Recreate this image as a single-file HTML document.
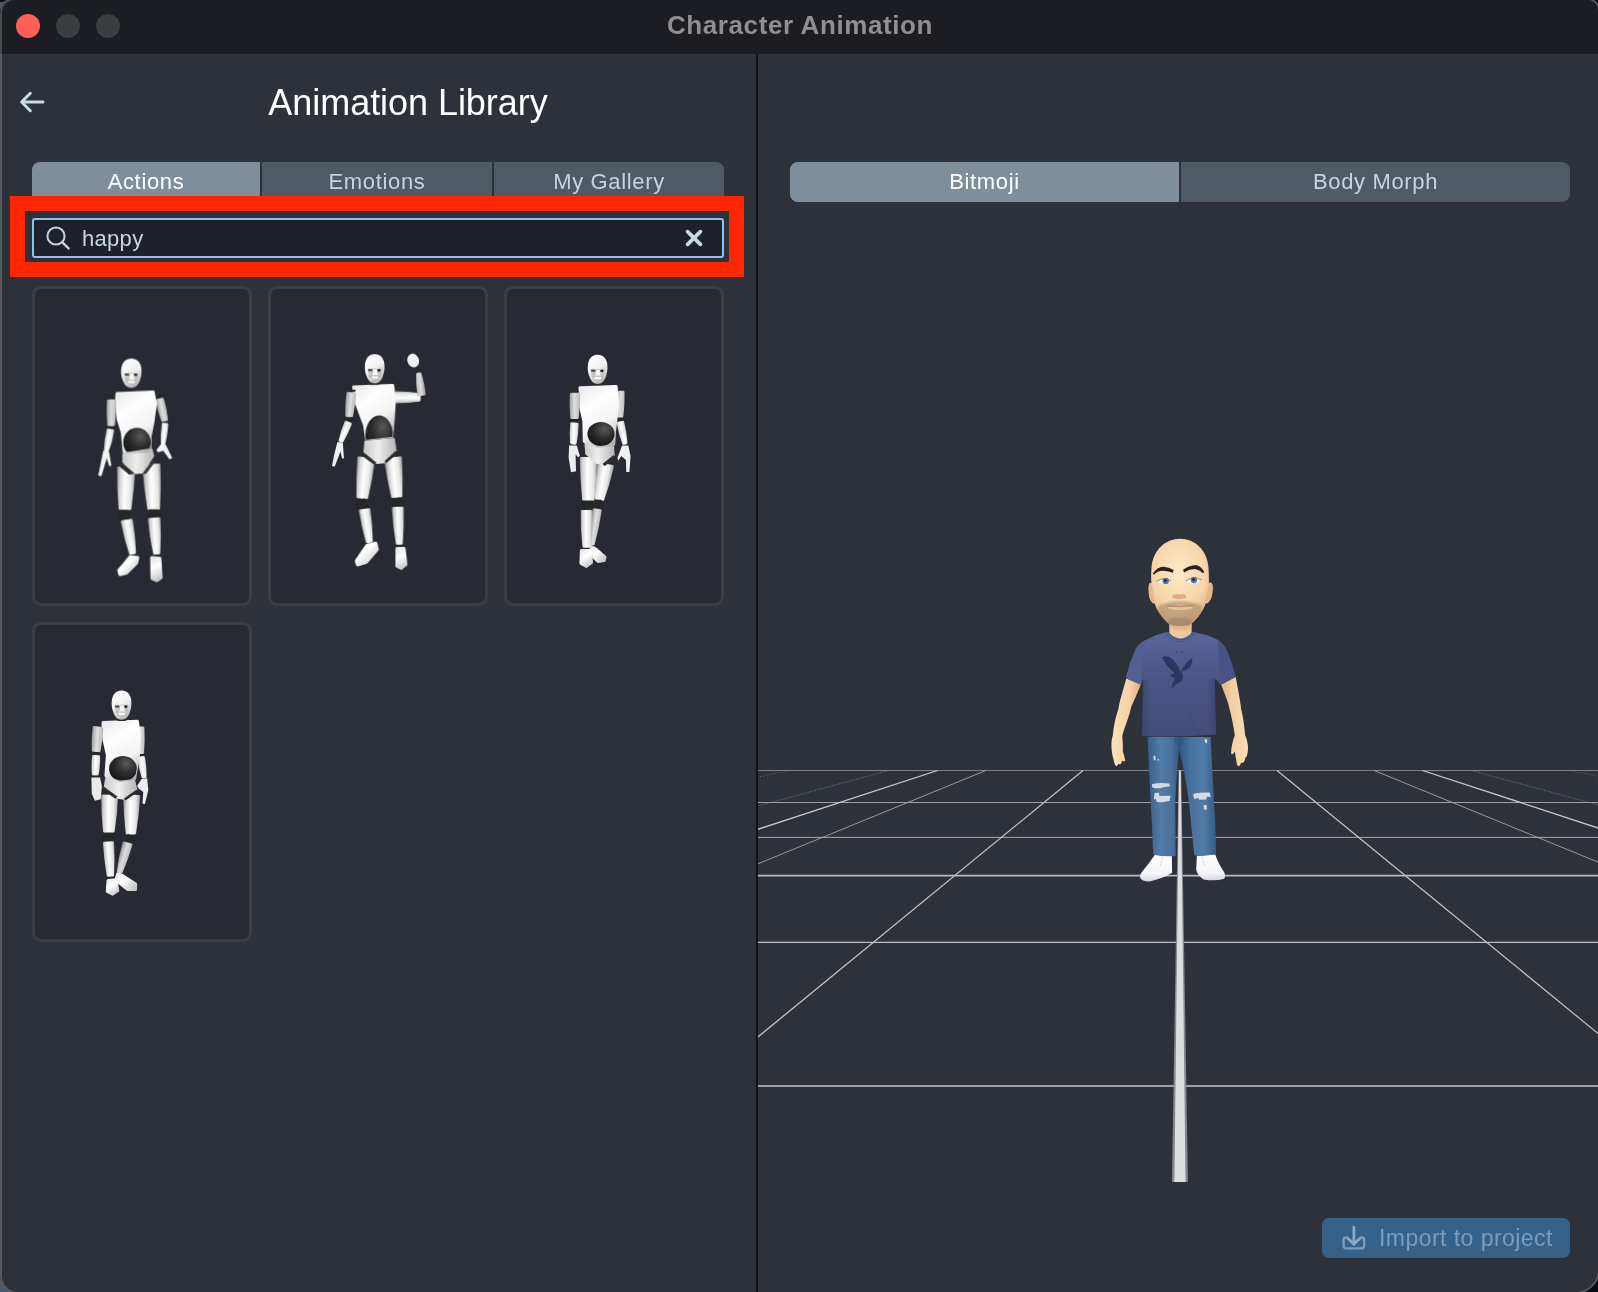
<!DOCTYPE html>
<html>
<head>
<meta charset="utf-8">
<title>Character Animation</title>
<style>
*{box-sizing:border-box;margin:0;padding:0}
html,body{width:1598px;height:1292px;overflow:hidden;background:#0a0c10;font-family:"Liberation Sans",sans-serif;}
#bgl{position:absolute;left:0;top:2px;width:10px;height:1290px;background:#46596a}
#win{position:absolute;left:0;top:0;width:1598px;height:1292px;background:#2d313a;box-shadow:0 0 0 1.5px #5b5f66;border-radius:13px 10px 22px 16px;overflow:hidden;}
#edge{position:absolute;left:0;top:0;width:1598px;height:1292px;border-radius:13px 10px 22px 16px;box-shadow:inset 2px 0 0 0 rgba(255,255,255,0.2);pointer-events:none;z-index:50}
#titlebar{position:absolute;left:0;top:0;width:1598px;height:54px;background:#1b1d22}
.dot{position:absolute;top:14px;width:24px;height:24px;border-radius:50%}
#title{position:absolute;left:0;top:0;width:1598px;height:54px;text-align:center;color:#8f8f90;font-weight:bold;font-size:26px;line-height:50px;letter-spacing:0.6px;padding-left:2px}
#divider{position:absolute;left:756px;top:54px;width:2px;height:1238px;background:#0f1114}
.abs{position:absolute}
.tab{position:absolute;top:162px;height:40px;background:#505a65;color:#c6d4e1;font-size:22px;line-height:40px;text-align:center;letter-spacing:0.65px}
.tab.on{background:#808d9b;color:#fff}
#red{position:absolute;left:10px;top:196px;width:734px;height:81px;border:15px solid #ff2600;background:#2d313a}
#search{position:absolute;left:32px;top:218px;width:692px;height:40px;border:2px solid #8bc2f2;border-radius:3px;background:#1e2129}
.card{position:absolute;width:220px;height:320px;border:3px solid #3a3d44;border-radius:9px;background:#272a33}
#import{position:absolute;left:1322px;top:1218px;width:248px;height:40px;border-radius:7px;background:#36628a;color:#7f9cb7;font-size:23px;line-height:40px;letter-spacing:0.45px}
.tab,#title,#h1,#q,#imptxt{will-change:transform}
</style>
</head>
<body>
<div id="bgl"></div>
<div id="win">
  <div id="titlebar"></div>
  <div class="dot" style="left:16px;background:#fe5f57"></div>
  <div class="dot" style="left:56px;background:#3a3d41"></div>
  <div class="dot" style="left:96px;background:#3a3d41"></div>
  <div id="title">Character Animation</div>
  <div id="edge"></div>
  <div id="divider"></div>

  <!-- left panel -->
  <svg class="abs" style="left:0;top:54px" width="756" height="100" viewBox="0 54 756 100">
    <path d="M43 102H22M30.3 93.3L21.6 102L30.3 110.7" fill="none" stroke="#c9dae8" stroke-width="3" stroke-linecap="round" stroke-linejoin="round"/>
  </svg>
  <div id="h1" class="abs" style="left:0;top:80px;width:816px;text-align:center;color:#fff;font-size:36px;line-height:46px;letter-spacing:-0.05px">Animation Library</div>

  <div class="tab on" style="left:32px;width:228px;border-radius:8px 0 0 0">Actions</div>
  <div class="tab" style="left:262px;width:230px">Emotions</div>
  <div class="tab" style="left:494px;width:230px;border-radius:0 8px 0 0">My Gallery</div>

  <div id="red"></div>
  <div id="search"></div>
  <svg class="abs" style="left:40px;top:220px" width="40" height="36" viewBox="40 220 40 36">
    <circle cx="56" cy="236" r="8.6" fill="none" stroke="#c6d4e0" stroke-width="2"/>
    <path d="M62.3 242.3L68.6 248.4" stroke="#c6d4e0" stroke-width="2.4" stroke-linecap="round"/>
  </svg>
  <div id="q" class="abs" style="left:82px;top:223px;color:#c8d5e1;font-size:22px;line-height:32px;letter-spacing:0.3px">happy</div>
  <svg class="abs" style="left:680px;top:224px" width="28" height="28" viewBox="680 224 28 28">
    <path d="M687.6 231.7L700.4 244.3M700.4 231.7L687.6 244.3" stroke="#cad7e1" stroke-width="3.8" stroke-linecap="round"/>
  </svg>

  <div class="card" style="left:32px;top:286px"></div>
  <div class="card" style="left:268px;top:286px"></div>
  <div class="card" style="left:504px;top:286px"></div>
  <div class="card" style="left:32px;top:622px"></div>

<!--ROBOTS-->
<svg class="abs" style="left:82px;top:340px" width="120" height="250" viewBox="0 0 620 1292">
<defs><filter id="abl"><feGaussianBlur stdDeviation="1.6"/></filter><linearGradient id="ag1" gradientUnits="userSpaceOnUse" x1="388" y1="367" x2="440" y2="355"><stop offset="0" stop-color="#7a7a7a"/><stop offset="0.2" stop-color="#b4b4b4"/><stop offset="0.5" stop-color="#dedede"/><stop offset="0.85" stop-color="#c2c2c2"/><stop offset="1" stop-color="#8a8a8a"/></linearGradient><linearGradient id="ag2" gradientUnits="userSpaceOnUse" x1="403" y1="482" x2="445" y2="486"><stop offset="0" stop-color="#8a8a8a"/><stop offset="0.16" stop-color="#d2d2d2"/><stop offset="0.45" stop-color="#ffffff"/><stop offset="0.78" stop-color="#e6e6e6"/><stop offset="1" stop-color="#a2a2a2"/></linearGradient><linearGradient id="ag3" gradientUnits="userSpaceOnUse" x1="178" y1="765" x2="272" y2="768"><stop offset="0" stop-color="#8a8a8a"/><stop offset="0.16" stop-color="#d2d2d2"/><stop offset="0.45" stop-color="#ffffff"/><stop offset="0.78" stop-color="#e6e6e6"/><stop offset="1" stop-color="#a2a2a2"/></linearGradient><linearGradient id="ag4" gradientUnits="userSpaceOnUse" x1="317" y1="761" x2="411" y2="757"><stop offset="0" stop-color="#8a8a8a"/><stop offset="0.16" stop-color="#d2d2d2"/><stop offset="0.45" stop-color="#ffffff"/><stop offset="0.78" stop-color="#e6e6e6"/><stop offset="1" stop-color="#a2a2a2"/></linearGradient><linearGradient id="ag5" gradientUnits="userSpaceOnUse" x1="214" y1="1024" x2="278" y2="1012"><stop offset="0" stop-color="#8a8a8a"/><stop offset="0.16" stop-color="#d2d2d2"/><stop offset="0.45" stop-color="#ffffff"/><stop offset="0.78" stop-color="#e6e6e6"/><stop offset="1" stop-color="#a2a2a2"/></linearGradient><linearGradient id="ag6" gradientUnits="userSpaceOnUse" x1="346" y1="1015" x2="412" y2="1011"><stop offset="0" stop-color="#8a8a8a"/><stop offset="0.16" stop-color="#d2d2d2"/><stop offset="0.45" stop-color="#ffffff"/><stop offset="0.78" stop-color="#e6e6e6"/><stop offset="1" stop-color="#a2a2a2"/></linearGradient><linearGradient id="ag7" gradientUnits="userSpaceOnUse" x1="190" y1="1120" x2="288" y2="1212"><stop offset="0" stop-color="#e6e6e6"/><stop offset="0.4" stop-color="#ffffff"/><stop offset="1" stop-color="#c2c2c2"/></linearGradient><linearGradient id="ag8" gradientUnits="userSpaceOnUse" x1="360" y1="1124" x2="408" y2="1244"><stop offset="0" stop-color="#e6e6e6"/><stop offset="0.4" stop-color="#ffffff"/><stop offset="1" stop-color="#c2c2c2"/></linearGradient><linearGradient id="ag9" gradientUnits="userSpaceOnUse" x1="208" y1="560" x2="374" y2="560"><stop offset="0" stop-color="#c9c9c9"/><stop offset="0.45" stop-color="#eeeeee"/><stop offset="1" stop-color="#b5b5b5"/></linearGradient><linearGradient id="ag10" gradientUnits="userSpaceOnUse" x1="176" y1="268" x2="380" y2="580"><stop offset="0" stop-color="#e9e9e9"/><stop offset="0.3" stop-color="#ffffff"/><stop offset="0.62" stop-color="#f4f4f4"/><stop offset="1" stop-color="#a4a4a4"/></linearGradient><radialGradient id="ag11" cx="0.62" cy="0.3" r="0.75"><stop offset="0" stop-color="#5a5a5a"/><stop offset="0.5" stop-color="#2c2c2c"/><stop offset="1" stop-color="#141414"/></radialGradient><clipPath id="ac11"><path d="M200 440 L370 440 L356 560 L214 582Z"/></clipPath><linearGradient id="ag12" gradientUnits="userSpaceOnUse" x1="122" y1="375" x2="180" y2="376"><stop offset="0" stop-color="#7a7a7a"/><stop offset="0.2" stop-color="#b4b4b4"/><stop offset="0.5" stop-color="#dedede"/><stop offset="0.85" stop-color="#c2c2c2"/><stop offset="1" stop-color="#8a8a8a"/></linearGradient><linearGradient id="ag13" gradientUnits="userSpaceOnUse" x1="113" y1="515" x2="160" y2="523"><stop offset="0" stop-color="#8a8a8a"/><stop offset="0.16" stop-color="#d2d2d2"/><stop offset="0.45" stop-color="#ffffff"/><stop offset="0.78" stop-color="#e6e6e6"/><stop offset="1" stop-color="#a2a2a2"/></linearGradient><linearGradient id="ag14" x1="0.3" y1="0" x2="0.7" y2="1"><stop offset="0" stop-color="#ffffff"/><stop offset="0.45" stop-color="#f2f2f2"/><stop offset="1" stop-color="#b0b0b0"/></linearGradient></defs>
<g filter="url(#abl)">
<rect x="377.0" y="288.0" width="30" height="24" rx="8" fill="#262626" transform="rotate(-20 392 300)"/>
<path d="M387 312 Q396 365 416 416 L437 411 Q432 357 416 305Z" fill="url(#ag1)" stroke="url(#ag1)" stroke-width="14" stroke-linejoin="round"/>
<path d="M419 434 Q412 483 414 533 L424 534 Q436 485 439 436Z" fill="url(#ag2)" stroke="url(#ag2)" stroke-width="14" stroke-linejoin="round"/>
<path d="M408 538 L432 540 L466 610 L452 616 L420 572 L392 580 L384 568Z" fill="#f2f2f2" />
<path d="M188 661 Q187 765 196 870 L248 872 Q263 768 268 663Z" fill="url(#ag3)" stroke="url(#ag3)" stroke-width="14" stroke-linejoin="round"/>
<path d="M318 649 Q326 761 344 872 L396 870 Q402 757 398 645Z" fill="url(#ag4)" stroke="url(#ag4)" stroke-width="14" stroke-linejoin="round"/>
<rect x="192.0" y="879.0" width="56" height="46" rx="8" fill="#262626" transform="rotate(0 220 902)"/>
<rect x="342.0" y="875.0" width="60" height="42" rx="8" fill="#262626" transform="rotate(0 372 896)"/>
<path d="M207 939 Q223 1022 250 1103 L272 1099 Q269 1014 256 931Z" fill="url(#ag5)" stroke="url(#ag5)" stroke-width="14" stroke-linejoin="round"/>
<path d="M347 927 Q355 1015 374 1102 L397 1100 Q403 1011 398 923Z" fill="url(#ag6)" stroke="url(#ag6)" stroke-width="14" stroke-linejoin="round"/>
<path d="M248 1120 L288 1124 L282 1152 L230 1204 L196 1212 L190 1190 L216 1160Z" fill="url(#ag7)" stroke="url(#ag7)" stroke-width="16" stroke-linejoin="round"/>
<path d="M360 1124 L402 1128 L408 1228 L385 1244 L362 1232Z" fill="url(#ag8)" stroke="url(#ag8)" stroke-width="16" stroke-linejoin="round"/>
<path d="M208 588 L362 560 L374 600 L345 642 L315 690 L270 692 L238 670 L208 632Z" fill="url(#ag9)"/>
<path d="M200 628 L272 690 L244 696 L192 652Z" fill="#2e2e2e" />
<path d="M312 690 L366 618 L376 632 L330 692Z" fill="#3a3a3a" />
<path d="M180 276 L368 268 L380 330 L366 430 L352 500 L352 560 L345 574 L216 580 L208 480 L186 410 L176 330Z" fill="url(#ag10)" stroke="url(#ag10)" stroke-width="14" stroke-linejoin="round"/>
<ellipse cx="284" cy="528" rx="71" ry="74" fill="url(#ag11)" clip-path="url(#ac11)"/>
<rect x="133.0" y="287.0" width="34" height="26" rx="8" fill="#262626" transform="rotate(25 150 300)"/>
<path d="M135 313 Q131 375 137 438 L163 438 Q171 376 169 313Z" fill="url(#ag12)" stroke="url(#ag12)" stroke-width="14" stroke-linejoin="round"/>
<rect x="130.0" y="448.0" width="40" height="8" rx="8" fill="#262626" transform="rotate(0 150 452)"/>
<path d="M134 464 Q122 516 120 570 L132 572 Q151 522 159 469Z" fill="url(#ag13)" stroke="url(#ag13)" stroke-width="14" stroke-linejoin="round"/>
<path d="M110 572 L140 578 L152 650 L140 652 L128 610 L100 704 L84 700 L96 640Z" fill="#f2f2f2" />
<rect x="233" y="234" width="46" height="20" rx="4" fill="#2e2e2e"/>
<path d="M255 96 C317.4 96 313.24 175.2 299.72 207.6 C291.4 236.39999999999998 273.2 247.2 255 247.2 C236.8 247.2 218.6 236.39999999999998 210.28 207.6 C196.76 175.2 192.6 96 255 96Z" fill="url(#ag14)"/>
<path d="M217.56 170 L292.44 170 L286.2 212.64 Q255 247.2 223.8 212.64Z" fill="#bdbdbd" opacity="0.8"/>
<path d="M249 174 L265 174 L271 204.0 L243 204.0Z" fill="#ffffff" opacity="0.85"/>
<rect x="221" y="174" width="22" height="10" rx="3" fill="#4a4640"/><rect x="269" y="174" width="16" height="11" rx="4" fill="#1e1e1e"/>
<rect x="239" y="211.2" width="34" height="11" rx="3" fill="#fafafa"/>
</g>
</svg>
<svg class="abs" style="left:318px;top:340px" width="120" height="250" viewBox="0 0 620 1292">
<defs><filter id="bbl"><feGaussianBlur stdDeviation="1.6"/></filter><linearGradient id="bg1" gradientUnits="userSpaceOnUse" x1="464" y1="330" x2="464" y2="262"><stop offset="0" stop-color="#8a8a8a"/><stop offset="0.16" stop-color="#d2d2d2"/><stop offset="0.45" stop-color="#ffffff"/><stop offset="0.78" stop-color="#e6e6e6"/><stop offset="1" stop-color="#a2a2a2"/></linearGradient><linearGradient id="bg2" gradientUnits="userSpaceOnUse" x1="553" y1="225" x2="503" y2="231"><stop offset="0" stop-color="#7a7a7a"/><stop offset="0.2" stop-color="#b4b4b4"/><stop offset="0.5" stop-color="#dedede"/><stop offset="0.85" stop-color="#c2c2c2"/><stop offset="1" stop-color="#8a8a8a"/></linearGradient><linearGradient id="bg3" gradientUnits="userSpaceOnUse" x1="194" y1="708" x2="284" y2="717"><stop offset="0" stop-color="#8a8a8a"/><stop offset="0.16" stop-color="#d2d2d2"/><stop offset="0.45" stop-color="#ffffff"/><stop offset="0.78" stop-color="#e6e6e6"/><stop offset="1" stop-color="#a2a2a2"/></linearGradient><linearGradient id="bg4" gradientUnits="userSpaceOnUse" x1="353" y1="714" x2="441" y2="705"><stop offset="0" stop-color="#8a8a8a"/><stop offset="0.16" stop-color="#d2d2d2"/><stop offset="0.45" stop-color="#ffffff"/><stop offset="0.78" stop-color="#e6e6e6"/><stop offset="1" stop-color="#a2a2a2"/></linearGradient><linearGradient id="bg5" gradientUnits="userSpaceOnUse" x1="222" y1="965" x2="284" y2="955"><stop offset="0" stop-color="#8a8a8a"/><stop offset="0.16" stop-color="#d2d2d2"/><stop offset="0.45" stop-color="#ffffff"/><stop offset="0.78" stop-color="#e6e6e6"/><stop offset="1" stop-color="#a2a2a2"/></linearGradient><linearGradient id="bg6" gradientUnits="userSpaceOnUse" x1="385" y1="961" x2="447" y2="959"><stop offset="0" stop-color="#8a8a8a"/><stop offset="0.16" stop-color="#d2d2d2"/><stop offset="0.45" stop-color="#ffffff"/><stop offset="0.78" stop-color="#e6e6e6"/><stop offset="1" stop-color="#a2a2a2"/></linearGradient><linearGradient id="bg7" gradientUnits="userSpaceOnUse" x1="198" y1="1050" x2="306" y2="1162"><stop offset="0" stop-color="#e6e6e6"/><stop offset="0.4" stop-color="#ffffff"/><stop offset="1" stop-color="#c2c2c2"/></linearGradient><linearGradient id="bg8" gradientUnits="userSpaceOnUse" x1="408" y1="1078" x2="454" y2="1180"><stop offset="0" stop-color="#e6e6e6"/><stop offset="0.4" stop-color="#ffffff"/><stop offset="1" stop-color="#c2c2c2"/></linearGradient><linearGradient id="bg9" gradientUnits="userSpaceOnUse" x1="234" y1="506" x2="406" y2="506"><stop offset="0" stop-color="#c9c9c9"/><stop offset="0.45" stop-color="#eeeeee"/><stop offset="1" stop-color="#b5b5b5"/></linearGradient><linearGradient id="bg10" gradientUnits="userSpaceOnUse" x1="184" y1="234" x2="396" y2="512"><stop offset="0" stop-color="#e9e9e9"/><stop offset="0.3" stop-color="#ffffff"/><stop offset="0.62" stop-color="#f4f4f4"/><stop offset="1" stop-color="#a4a4a4"/></linearGradient><radialGradient id="bg11" cx="0.62" cy="0.3" r="0.75"><stop offset="0" stop-color="#5a5a5a"/><stop offset="0.5" stop-color="#2c2c2c"/><stop offset="1" stop-color="#141414"/></radialGradient><clipPath id="bc11"><path d="M230 380 L400 380 L386 500 L246 516Z"/></clipPath><linearGradient id="bg12" gradientUnits="userSpaceOnUse" x1="137" y1="331" x2="195" y2="337"><stop offset="0" stop-color="#7a7a7a"/><stop offset="0.2" stop-color="#b4b4b4"/><stop offset="0.5" stop-color="#dedede"/><stop offset="0.85" stop-color="#c2c2c2"/><stop offset="1" stop-color="#8a8a8a"/></linearGradient><linearGradient id="bg13" gradientUnits="userSpaceOnUse" x1="115" y1="466" x2="159" y2="484"><stop offset="0" stop-color="#8a8a8a"/><stop offset="0.16" stop-color="#d2d2d2"/><stop offset="0.45" stop-color="#ffffff"/><stop offset="0.78" stop-color="#e6e6e6"/><stop offset="1" stop-color="#a2a2a2"/></linearGradient><linearGradient id="bg14" x1="0.3" y1="0" x2="0.7" y2="1"><stop offset="0" stop-color="#ffffff"/><stop offset="0.45" stop-color="#f2f2f2"/><stop offset="1" stop-color="#b0b0b0"/></linearGradient></defs>
<g filter="url(#bbl)">
<path d="M405 320 Q464 320 523 311 L523 281 Q464 272 405 272Z" fill="url(#bg1)" stroke="url(#bg1)" stroke-width="14" stroke-linejoin="round"/>
<rect x="538.0" y="281.0" width="16" height="30" rx="8" fill="#262626" transform="rotate(0 546 296)"/>
<path d="M550 279 Q544 226 528 174 L514 176 Q512 230 520 283Z" fill="url(#bg2)" stroke="url(#bg2)" stroke-width="14" stroke-linejoin="round"/>
<rect x="503.0" y="148.0" width="28" height="14" rx="8" fill="#262626" transform="rotate(10 517 155)"/>
<ellipse cx="492" cy="106" rx="30" ry="36" fill="#f0f0f0" transform="rotate(-20 492 106)"/>
<path d="M210 608 Q203 709 206 811 L252 815 Q275 716 288 616Z" fill="url(#bg3)" stroke="url(#bg3)" stroke-width="14" stroke-linejoin="round"/>
<path d="M348 616 Q362 713 385 809 L429 805 Q432 706 426 608Z" fill="url(#bg4)" stroke="url(#bg4)" stroke-width="14" stroke-linejoin="round"/>
<rect x="202.0" y="823.0" width="52" height="46" rx="8" fill="#262626" transform="rotate(-15 228 846)"/>
<rect x="382.0" y="818.0" width="56" height="40" rx="8" fill="#262626" transform="rotate(0 410 838)"/>
<path d="M218 882 Q231 963 254 1043 L276 1039 Q275 957 264 876Z" fill="url(#bg5)" stroke="url(#bg5)" stroke-width="14" stroke-linejoin="round"/>
<path d="M388 870 Q394 961 409 1051 L431 1051 Q438 959 436 868Z" fill="url(#bg6)" stroke="url(#bg6)" stroke-width="14" stroke-linejoin="round"/>
<path d="M252 1062 L298 1050 L306 1082 L250 1148 L204 1162 L198 1142 L226 1100Z" fill="url(#bg7)" stroke="url(#bg7)" stroke-width="16" stroke-linejoin="round"/>
<path d="M408 1078 L444 1078 L454 1160 L430 1180 L408 1168Z" fill="url(#bg8)" stroke="url(#bg8)" stroke-width="16" stroke-linejoin="round"/>
<path d="M240 520 L396 506 L406 570 L350 636 L300 640 L234 582Z" fill="url(#bg9)"/>
<path d="M230 576 L302 634 L292 646 L224 596Z" fill="#2e2e2e" />
<path d="M344 626 L402 572 L408 590 L350 638Z" fill="#2e2e2e" />
<path d="M184 242 L386 234 L396 300 L390 400 L382 500 L250 512 L240 440 L206 350 L186 300Z" fill="url(#bg10)" stroke="url(#bg10)" stroke-width="14" stroke-linejoin="round"/>
<ellipse cx="316" cy="490" rx="71" ry="100" fill="url(#bg11)" clip-path="url(#bc11)"/>
<rect x="165.0" y="256.0" width="30" height="12" rx="8" fill="#262626" transform="rotate(0 180 262)"/>
<path d="M153 275 Q146 332 148 390 L174 392 Q186 336 189 279Z" fill="url(#bg12)" stroke="url(#bg12)" stroke-width="14" stroke-linejoin="round"/>
<rect x="137.0" y="403.0" width="46" height="14" rx="8" fill="#262626" transform="rotate(-10 160 410)"/>
<path d="M143 424 Q124 470 113 519 L124 524 Q150 480 168 433Z" fill="url(#bg13)" stroke="url(#bg13)" stroke-width="14" stroke-linejoin="round"/>
<path d="M100 526 L128 532 L134 612 L124 612 L116 576 L86 654 L72 650 L84 590Z" fill="#f0f0f0" />
<rect x="271" y="211" width="46" height="20" rx="4" fill="#2e2e2e"/>
<path d="M293 73 C353.0 73 349.0 152.2 336.0 184.6 C328.0 213.39999999999998 310.5 224.2 293 224.2 C275.5 224.2 258.0 213.39999999999998 250.0 184.6 C237.0 152.2 233.0 73 293 73Z" fill="url(#bg14)"/>
<path d="M257.0 147 L329.0 147 L323.0 189.64 Q293 224.2 263.0 189.64Z" fill="#bdbdbd" opacity="0.8"/>
<path d="M287 151 L303 151 L309 181.0 L281 181.0Z" fill="#ffffff" opacity="0.85"/>
<rect x="259" y="151" width="22" height="10" rx="3" fill="#4a4640"/><rect x="307" y="151" width="16" height="11" rx="4" fill="#1e1e1e"/>
<rect x="277" y="188.2" width="34" height="11" rx="3" fill="#fafafa"/>
</g>
</svg>
<svg class="abs" style="left:540px;top:340px" width="120" height="250" viewBox="0 0 620 1292">
<defs><filter id="cbl"><feGaussianBlur stdDeviation="1.6"/></filter><linearGradient id="cg1" gradientUnits="userSpaceOnUse" x1="386" y1="330" x2="441" y2="332"><stop offset="0" stop-color="#7a7a7a"/><stop offset="0.2" stop-color="#b4b4b4"/><stop offset="0.5" stop-color="#dedede"/><stop offset="0.85" stop-color="#c2c2c2"/><stop offset="1" stop-color="#8a8a8a"/></linearGradient><linearGradient id="cg2" gradientUnits="userSpaceOnUse" x1="404" y1="485" x2="450" y2="475"><stop offset="0" stop-color="#8a8a8a"/><stop offset="0.16" stop-color="#d2d2d2"/><stop offset="0.45" stop-color="#ffffff"/><stop offset="0.78" stop-color="#e6e6e6"/><stop offset="1" stop-color="#a2a2a2"/></linearGradient><linearGradient id="cg3" gradientUnits="userSpaceOnUse" x1="256" y1="962" x2="308" y2="970"><stop offset="0" stop-color="#7a7a7a"/><stop offset="0.2" stop-color="#b4b4b4"/><stop offset="0.5" stop-color="#dedede"/><stop offset="0.85" stop-color="#c2c2c2"/><stop offset="1" stop-color="#8a8a8a"/></linearGradient><linearGradient id="cg4" gradientUnits="userSpaceOnUse" x1="264" y1="1068" x2="336" y2="1144"><stop offset="0" stop-color="#e6e6e6"/><stop offset="0.4" stop-color="#ffffff"/><stop offset="1" stop-color="#c2c2c2"/></linearGradient><linearGradient id="cg5" gradientUnits="userSpaceOnUse" x1="282" y1="727" x2="364" y2="741"><stop offset="0" stop-color="#8a8a8a"/><stop offset="0.16" stop-color="#d2d2d2"/><stop offset="0.45" stop-color="#ffffff"/><stop offset="0.78" stop-color="#e6e6e6"/><stop offset="1" stop-color="#a2a2a2"/></linearGradient><linearGradient id="cg6" gradientUnits="userSpaceOnUse" x1="204" y1="718" x2="296" y2="718"><stop offset="0" stop-color="#8a8a8a"/><stop offset="0.16" stop-color="#d2d2d2"/><stop offset="0.45" stop-color="#ffffff"/><stop offset="0.78" stop-color="#e6e6e6"/><stop offset="1" stop-color="#a2a2a2"/></linearGradient><linearGradient id="cg7" gradientUnits="userSpaceOnUse" x1="208" y1="976" x2="272" y2="976"><stop offset="0" stop-color="#8a8a8a"/><stop offset="0.16" stop-color="#d2d2d2"/><stop offset="0.45" stop-color="#ffffff"/><stop offset="0.78" stop-color="#e6e6e6"/><stop offset="1" stop-color="#a2a2a2"/></linearGradient><linearGradient id="cg8" gradientUnits="userSpaceOnUse" x1="212" y1="1088" x2="266" y2="1170"><stop offset="0" stop-color="#e6e6e6"/><stop offset="0.4" stop-color="#ffffff"/><stop offset="1" stop-color="#c2c2c2"/></linearGradient><linearGradient id="cg9" gradientUnits="userSpaceOnUse" x1="228" y1="520" x2="386" y2="520"><stop offset="0" stop-color="#c9c9c9"/><stop offset="0.45" stop-color="#eeeeee"/><stop offset="1" stop-color="#b5b5b5"/></linearGradient><linearGradient id="cg10" gradientUnits="userSpaceOnUse" x1="206" y1="240" x2="402" y2="550"><stop offset="0" stop-color="#e9e9e9"/><stop offset="0.3" stop-color="#ffffff"/><stop offset="0.62" stop-color="#f4f4f4"/><stop offset="1" stop-color="#a4a4a4"/></linearGradient><radialGradient id="cg11" cx="0.62" cy="0.3" r="0.75"><stop offset="0" stop-color="#5a5a5a"/><stop offset="0.5" stop-color="#2c2c2c"/><stop offset="1" stop-color="#141414"/></radialGradient><clipPath id="cc11"><path d="M230 400 L400 400 L384 538 L300 552 L226 522Z"/></clipPath><linearGradient id="cg12" gradientUnits="userSpaceOnUse" x1="148" y1="340" x2="210" y2="340"><stop offset="0" stop-color="#7a7a7a"/><stop offset="0.2" stop-color="#b4b4b4"/><stop offset="0.5" stop-color="#dedede"/><stop offset="0.85" stop-color="#c2c2c2"/><stop offset="1" stop-color="#8a8a8a"/></linearGradient><linearGradient id="cg13" gradientUnits="userSpaceOnUse" x1="149" y1="482" x2="201" y2="484"><stop offset="0" stop-color="#8a8a8a"/><stop offset="0.16" stop-color="#d2d2d2"/><stop offset="0.45" stop-color="#ffffff"/><stop offset="0.78" stop-color="#e6e6e6"/><stop offset="1" stop-color="#a2a2a2"/></linearGradient><linearGradient id="cg14" x1="0.3" y1="0" x2="0.7" y2="1"><stop offset="0" stop-color="#ffffff"/><stop offset="0.45" stop-color="#f2f2f2"/><stop offset="1" stop-color="#b0b0b0"/></linearGradient></defs>
<g filter="url(#cbl)">
<path d="M400 269 Q395 331 400 393 L424 393 Q432 331 430 269Z" fill="url(#cg1)" stroke="url(#cg1)" stroke-width="14" stroke-linejoin="round"/>
<rect x="390.0" y="405.0" width="40" height="10" rx="8" fill="#262626" transform="rotate(0 410 410)"/>
<path d="M403 430 Q412 483 432 535 L445 532 Q442 477 428 424Z" fill="url(#cg2)" stroke="url(#cg2)" stroke-width="14" stroke-linejoin="round"/>
<path d="M424 545 L456 545 L468 600 L462 682 L446 682 L444 620 L420 600 L404 624 L400 610Z" fill="#f0f0f0" />
<path d="M278 876 Q265 963 262 1052 L276 1054 Q299 969 312 881Z" fill="url(#cg3)" stroke="url(#cg3)" stroke-width="14" stroke-linejoin="round"/>
<path d="M264 1068 L290 1082 L336 1122 L332 1140 L300 1144 L264 1108Z" fill="url(#cg4)" stroke="url(#cg4)" stroke-width="16" stroke-linejoin="round"/>
<path d="M302 640 Q291 728 290 818 L325 824 Q355 740 375 653Z" fill="url(#cg5)" stroke="url(#cg5)" stroke-width="14" stroke-linejoin="round"/>
<path d="M212 612 Q214 718 225 823 L275 823 Q286 718 288 612Z" fill="url(#cg6)" stroke="url(#cg6)" stroke-width="14" stroke-linejoin="round"/>
<rect x="222.0" y="832.0" width="56" height="40" rx="8" fill="#262626" transform="rotate(0 250 852)"/>
<rect x="282.0" y="826.0" width="40" height="40" rx="8" fill="#262626" transform="rotate(0 302 846)"/>
<path d="M217 885 Q216 976 226 1067 L254 1067 Q264 976 263 885Z" fill="url(#cg7)" stroke="url(#cg7)" stroke-width="14" stroke-linejoin="round"/>
<path d="M214 1088 L260 1088 L266 1150 L240 1170 L212 1154Z" fill="url(#cg8)" stroke="url(#cg8)" stroke-width="16" stroke-linejoin="round"/>
<path d="M228 520 L300 548 L382 535 L386 600 L326 646 L290 640 L234 590Z" fill="url(#cg9)"/>
<path d="M324 640 L380 594 L386 610 L334 652Z" fill="#2e2e2e" />
<path d="M206 246 L394 240 L402 330 L392 420 L386 470 L382 540 L300 550 L228 524 L226 420 L206 330Z" fill="url(#cg10)" stroke="url(#cg10)" stroke-width="14" stroke-linejoin="round"/>
<ellipse cx="315" cy="486" rx="70" ry="62" fill="url(#cg11)" clip-path="url(#cc11)"/>
<rect x="164.0" y="261.0" width="36" height="14" rx="8" fill="#262626" transform="rotate(0 182 268)"/>
<path d="M161 279 Q157 340 163 401 L193 401 Q201 340 199 279Z" fill="url(#cg12)" stroke="url(#cg12)" stroke-width="14" stroke-linejoin="round"/>
<rect x="155.0" y="411.0" width="46" height="10" rx="8" fill="#262626" transform="rotate(0 178 416)"/>
<path d="M163 432 Q158 482 162 532 L182 534 Q192 484 193 434Z" fill="url(#cg13)" stroke="url(#cg13)" stroke-width="14" stroke-linejoin="round"/>
<path d="M150 545 L190 545 L206 600 L196 606 L184 590 L186 678 L160 684 L148 610Z" fill="#ececec" />
<rect x="276" y="214" width="46" height="20" rx="4" fill="#2e2e2e"/>
<path d="M298 76 C358.0 76 354.0 155.2 341.0 187.6 C333.0 216.39999999999998 315.5 227.2 298 227.2 C280.5 227.2 263.0 216.39999999999998 255.0 187.6 C242.0 155.2 238.0 76 298 76Z" fill="url(#cg14)"/>
<path d="M262.0 150 L334.0 150 L328.0 192.64 Q298 227.2 268.0 192.64Z" fill="#bdbdbd" opacity="0.8"/>
<path d="M292 154 L308 154 L314 184.0 L286 184.0Z" fill="#ffffff" opacity="0.85"/>
<rect x="264" y="154" width="22" height="10" rx="3" fill="#4a4640"/><rect x="312" y="154" width="16" height="11" rx="4" fill="#1e1e1e"/>
<rect x="282" y="191.2" width="34" height="11" rx="3" fill="#fafafa"/>
</g>
</svg>
<svg class="abs" style="left:62px;top:670px" width="120" height="250" viewBox="0 0 620 1292">
<defs><filter id="dbl"><feGaussianBlur stdDeviation="1.6"/></filter><linearGradient id="dg1" gradientUnits="userSpaceOnUse" x1="380" y1="363" x2="432" y2="363"><stop offset="0" stop-color="#7a7a7a"/><stop offset="0.2" stop-color="#b4b4b4"/><stop offset="0.5" stop-color="#dedede"/><stop offset="0.85" stop-color="#c2c2c2"/><stop offset="1" stop-color="#8a8a8a"/></linearGradient><linearGradient id="dg2" gradientUnits="userSpaceOnUse" x1="393" y1="506" x2="440" y2="500"><stop offset="0" stop-color="#8a8a8a"/><stop offset="0.16" stop-color="#d2d2d2"/><stop offset="0.45" stop-color="#ffffff"/><stop offset="0.78" stop-color="#e6e6e6"/><stop offset="1" stop-color="#a2a2a2"/></linearGradient><linearGradient id="dg3" gradientUnits="userSpaceOnUse" x1="291" y1="963" x2="345" y2="979"><stop offset="0" stop-color="#7a7a7a"/><stop offset="0.2" stop-color="#b4b4b4"/><stop offset="0.5" stop-color="#dedede"/><stop offset="0.85" stop-color="#c2c2c2"/><stop offset="1" stop-color="#8a8a8a"/></linearGradient><linearGradient id="dg4" gradientUnits="userSpaceOnUse" x1="278" y1="1054" x2="380" y2="1134"><stop offset="0" stop-color="#e6e6e6"/><stop offset="0.4" stop-color="#ffffff"/><stop offset="1" stop-color="#c2c2c2"/></linearGradient><linearGradient id="dg5" gradientUnits="userSpaceOnUse" x1="316" y1="747" x2="400" y2="748"><stop offset="0" stop-color="#8a8a8a"/><stop offset="0.16" stop-color="#d2d2d2"/><stop offset="0.45" stop-color="#ffffff"/><stop offset="0.78" stop-color="#e6e6e6"/><stop offset="1" stop-color="#a2a2a2"/></linearGradient><linearGradient id="dg6" gradientUnits="userSpaceOnUse" x1="200" y1="742" x2="288" y2="743"><stop offset="0" stop-color="#8a8a8a"/><stop offset="0.16" stop-color="#d2d2d2"/><stop offset="0.45" stop-color="#ffffff"/><stop offset="0.78" stop-color="#e6e6e6"/><stop offset="1" stop-color="#a2a2a2"/></linearGradient><linearGradient id="dg7" gradientUnits="userSpaceOnUse" x1="214" y1="979" x2="276" y2="975"><stop offset="0" stop-color="#8a8a8a"/><stop offset="0.16" stop-color="#d2d2d2"/><stop offset="0.45" stop-color="#ffffff"/><stop offset="0.78" stop-color="#e6e6e6"/><stop offset="1" stop-color="#a2a2a2"/></linearGradient><linearGradient id="dg8" gradientUnits="userSpaceOnUse" x1="234" y1="1084" x2="288" y2="1158"><stop offset="0" stop-color="#e6e6e6"/><stop offset="0.4" stop-color="#ffffff"/><stop offset="1" stop-color="#c2c2c2"/></linearGradient><linearGradient id="dg9" gradientUnits="userSpaceOnUse" x1="215" y1="545" x2="390" y2="545"><stop offset="0" stop-color="#c9c9c9"/><stop offset="0.45" stop-color="#eeeeee"/><stop offset="1" stop-color="#b5b5b5"/></linearGradient><linearGradient id="dg10" gradientUnits="userSpaceOnUse" x1="210" y1="264" x2="400" y2="572"><stop offset="0" stop-color="#e9e9e9"/><stop offset="0.3" stop-color="#ffffff"/><stop offset="0.62" stop-color="#f4f4f4"/><stop offset="1" stop-color="#a4a4a4"/></linearGradient><radialGradient id="dg11" cx="0.62" cy="0.3" r="0.75"><stop offset="0" stop-color="#5a5a5a"/><stop offset="0.5" stop-color="#2c2c2c"/><stop offset="1" stop-color="#141414"/></radialGradient><clipPath id="dc11"><path d="M230 430 L400 430 L378 562 L300 572 L224 546Z"/></clipPath><linearGradient id="dg12" gradientUnits="userSpaceOnUse" x1="149" y1="356" x2="213" y2="360"><stop offset="0" stop-color="#7a7a7a"/><stop offset="0.2" stop-color="#b4b4b4"/><stop offset="0.5" stop-color="#dedede"/><stop offset="0.85" stop-color="#c2c2c2"/><stop offset="1" stop-color="#8a8a8a"/></linearGradient><linearGradient id="dg13" gradientUnits="userSpaceOnUse" x1="148" y1="491" x2="200" y2="494"><stop offset="0" stop-color="#8a8a8a"/><stop offset="0.16" stop-color="#d2d2d2"/><stop offset="0.45" stop-color="#ffffff"/><stop offset="0.78" stop-color="#e6e6e6"/><stop offset="1" stop-color="#a2a2a2"/></linearGradient><linearGradient id="dg14" x1="0.3" y1="0" x2="0.7" y2="1"><stop offset="0" stop-color="#ffffff"/><stop offset="0.45" stop-color="#f2f2f2"/><stop offset="1" stop-color="#b0b0b0"/></linearGradient></defs>
<g filter="url(#dbl)">
<path d="M393 299 Q389 363 395 427 L417 427 Q423 363 419 299Z" fill="url(#dg1)" stroke="url(#dg1)" stroke-width="14" stroke-linejoin="round"/>
<rect x="388.0" y="436.0" width="36" height="8" rx="8" fill="#262626" transform="rotate(0 406 440)"/>
<path d="M396 455 Q402 505 418 554 L430 552 Q431 501 422 451Z" fill="url(#dg2)" stroke="url(#dg2)" stroke-width="14" stroke-linejoin="round"/>
<path d="M410 565 L440 560 L446 620 L428 694 L416 690 L420 630 L396 612 L388 600Z" fill="#eeeeee" />
<path d="M319 893 Q300 966 290 1041 L306 1045 Q336 976 357 904Z" fill="url(#dg3)" stroke="url(#dg3)" stroke-width="14" stroke-linejoin="round"/>
<path d="M288 1054 L312 1062 L380 1106 L380 1134 L340 1134 L278 1086Z" fill="url(#dg4)" stroke="url(#dg4)" stroke-width="16" stroke-linejoin="round"/>
<path d="M323 651 Q325 747 336 843 L376 843 Q391 748 397 653Z" fill="url(#dg5)" stroke="url(#dg5)" stroke-width="14" stroke-linejoin="round"/>
<path d="M209 651 Q209 742 219 833 L265 833 Q279 743 283 653Z" fill="url(#dg6)" stroke="url(#dg6)" stroke-width="14" stroke-linejoin="round"/>
<rect x="214.0" y="843.0" width="56" height="34" rx="8" fill="#262626" transform="rotate(0 242 860)"/>
<rect x="331.0" y="853.0" width="50" height="34" rx="8" fill="#262626" transform="rotate(15 356 870)"/>
<path d="M218 894 Q223 978 238 1062 L262 1060 Q267 976 262 892Z" fill="url(#dg7)" stroke="url(#dg7)" stroke-width="14" stroke-linejoin="round"/>
<path d="M238 1088 L278 1084 L288 1140 L262 1158 L234 1144Z" fill="url(#dg8)" stroke="url(#dg8)" stroke-width="16" stroke-linejoin="round"/>
<path d="M225 545 L300 570 L376 562 L390 620 L320 670 L290 666 L215 610Z" fill="url(#dg9)"/>
<path d="M210 598 L286 654 L276 666 L204 616Z" fill="#2e2e2e" />
<path d="M320 664 L386 618 L390 632 L328 674Z" fill="#2e2e2e" />
<path d="M212 270 L390 264 L400 330 L396 440 L386 500 L376 562 L300 572 L226 546 L234 440 L210 330Z" fill="url(#dg10)" stroke="url(#dg10)" stroke-width="14" stroke-linejoin="round"/>
<ellipse cx="315" cy="510" rx="72" ry="66" fill="url(#dg11)" clip-path="url(#dc11)"/>
<path d="M165 297 Q158 356 161 416 L192 418 Q204 360 206 301Z" fill="url(#dg12)" stroke="url(#dg12)" stroke-width="14" stroke-linejoin="round"/>
<rect x="153.0" y="428.0" width="46" height="8" rx="8" fill="#262626" transform="rotate(0 176 432)"/>
<path d="M162 446 Q157 492 161 538 L183 538 Q191 493 190 448Z" fill="url(#dg13)" stroke="url(#dg13)" stroke-width="14" stroke-linejoin="round"/>
<rect x="152.0" y="547.0" width="40" height="6" rx="8" fill="#262626" transform="rotate(0 172 550)"/>
<path d="M152 556 L196 556 L206 600 L200 668 L170 676 L154 640Z" fill="#eaeaea" />
<rect x="286" y="244" width="46" height="20" rx="4" fill="#2e2e2e"/>
<path d="M308 106 C368.0 106 364.0 185.2 351.0 217.6 C343.0 246.39999999999998 325.5 257.2 308 257.2 C290.5 257.2 273.0 246.39999999999998 265.0 217.6 C252.0 185.2 248.0 106 308 106Z" fill="url(#dg14)"/>
<path d="M272.0 180 L344.0 180 L338.0 222.64 Q308 257.2 278.0 222.64Z" fill="#bdbdbd" opacity="0.8"/>
<path d="M302 184 L318 184 L324 214.0 L296 214.0Z" fill="#ffffff" opacity="0.85"/>
<rect x="274" y="184" width="22" height="10" rx="3" fill="#4a4640"/><rect x="322" y="184" width="16" height="11" rx="4" fill="#1e1e1e"/>
<rect x="292" y="221.2" width="34" height="11" rx="3" fill="#fafafa"/>
</g>
</svg>
<!--/ROBOTS-->
  <!-- right panel -->
<svg class="abs" id="grid" style="left:758px;top:54px" width="840" height="1238" viewBox="758 54 840 1238">
<g stroke="#c9cbcd" fill="none">
<line x1="758" y1="770.5" x2="1598" y2="770.5" stroke-width="1" stroke="#7d8086"/>
<line x1="758" y1="802.5" x2="1598" y2="802.5" stroke-width="1" stroke="#9c9ea2"/>
<line x1="758" y1="837.4" x2="1598" y2="837.4" stroke-width="1" stroke="#a6a8ab"/>
<line x1="758" y1="875.6" x2="1598" y2="875.6" stroke-width="1.6" stroke="#b9bbbd"/>
<line x1="758" y1="942.4" x2="1598" y2="942.4" stroke-width="1.3" stroke="#bcbec0"/>
<line x1="758" y1="1086" x2="1598" y2="1086" stroke-width="1.5" stroke="#c4c6c8"/>
<line x1="1083.0" y1="770.5" x2="756.0" y2="1038.5" stroke-width="1.25" stroke="#c2c4c6"/>
<line x1="1277.0" y1="770.5" x2="1600.0" y2="1035.2" stroke-width="1.25" stroke="#c2c4c6"/>
<line x1="985.8" y1="770.5" x2="756.0" y2="864.6" stroke-width="0.9" stroke="#a4a6aa"/>
<line x1="1374.2" y1="770.5" x2="1600.0" y2="862.9" stroke-width="0.9" stroke="#a4a6aa"/>
<line x1="937.4" y1="770.5" x2="756.0" y2="829.9" stroke-width="1.3" stroke="#c9cbcd"/>
<line x1="1422.6" y1="770.5" x2="1600.0" y2="828.6" stroke-width="1.3" stroke="#c9cbcd"/>
<line x1="888.3" y1="770.5" x2="756.0" y2="806.6" stroke-width="0.8" stroke="#8d9095" stroke-dasharray="1 1.5"/>
<line x1="1471.7" y1="770.5" x2="1600.0" y2="805.5" stroke-width="0.8" stroke="#8d9095" stroke-dasharray="1 1.5"/>
<line x1="790.4" y1="770.5" x2="756.0" y2="777.5" stroke-width="0.8" stroke="#7f8388" stroke-dasharray="1 2"/>
<line x1="1569.6" y1="770.5" x2="1600.0" y2="776.7" stroke-width="0.8" stroke="#7f8388" stroke-dasharray="1 2"/>
</g>
<polygon points="1178.6,770.5 1181.2,770.5 1187.9,1182 1172,1182" fill="#85888d"/>
<polygon points="1179.1,770.5 1180.7,770.5 1185.5,1182 1174.4,1182" fill="#dcdddf"/>
</svg>
<svg class="abs" id="char" style="left:1060px;top:500px" width="260" height="420" viewBox="0 0 800 1292">
<defs>
  <radialGradient id="skinh" cx="0.47" cy="0.38" r="0.62"><stop offset="0" stop-color="#fde8c6"/><stop offset="0.65" stop-color="#f6d6ab"/><stop offset="1" stop-color="#e0b184"/></radialGradient>
  <linearGradient id="armL" x1="0" x2="1"><stop offset="0" stop-color="#fbe2bb"/><stop offset="0.6" stop-color="#f5d3a6"/><stop offset="1" stop-color="#dfae7e"/></linearGradient>
  <linearGradient id="armR" x1="0" x2="1"><stop offset="0" stop-color="#dfae7e"/><stop offset="0.4" stop-color="#f3cfa1"/><stop offset="1" stop-color="#fadfb6"/></linearGradient>
  <linearGradient id="shirt" x1="0" y1="0" x2="0" y2="1"><stop offset="0" stop-color="#596699"/><stop offset="0.45" stop-color="#4b5584"/><stop offset="1" stop-color="#444d7a"/></linearGradient>
  <linearGradient id="shside" x1="0" x2="1"><stop offset="0" stop-color="#343c68" stop-opacity="0.55"/><stop offset="0.12" stop-color="#343c68" stop-opacity="0"/><stop offset="0.88" stop-color="#343c68" stop-opacity="0"/><stop offset="1" stop-color="#343c68" stop-opacity="0.55"/></linearGradient>
  <linearGradient id="legL" x1="0" x2="1"><stop offset="0" stop-color="#355c86"/><stop offset="0.4" stop-color="#527ca8"/><stop offset="0.8" stop-color="#47709b"/><stop offset="1" stop-color="#325781"/></linearGradient>
  <linearGradient id="legR" x1="0" x2="1"><stop offset="0" stop-color="#325781"/><stop offset="0.3" stop-color="#47709b"/><stop offset="0.65" stop-color="#527ca8"/><stop offset="1" stop-color="#355c86"/></linearGradient>
  <linearGradient id="shoe" x1="0" y1="0" x2="0" y2="1"><stop offset="0" stop-color="#ffffff"/><stop offset="0.7" stop-color="#f6f6fa"/><stop offset="1" stop-color="#d5d7e2"/></linearGradient>
  <filter id="b14" x="-20%" y="-20%" width="140%" height="140%"><feGaussianBlur stdDeviation="14"/></filter>
  <filter id="b6" x="-20%" y="-20%" width="140%" height="140%"><feGaussianBlur stdDeviation="5"/></filter>
  <clipPath id="headclip"><path d="M540 95C700 95 830 220 845 400C850 470 850 520 850 570C880 550 900 590 890 650C885 720 860 790 815 790C790 870 720 960 660 1010C620 1045 460 1045 420 1010C360 960 290 870 265 790C225 790 200 720 200 650C195 590 210 560 230 575C228 520 225 470 232 400C250 220 380 95 540 95Z"/></clipPath>
</defs>

<!-- legs & shoes : zoom 7.6 origin (1110,730) -->
<g transform="translate(153.85 707.7) scale(0.4049)">
  <path d="M340 950 L470 955 L472 1085 Q400 1130 300 1150 Q240 1150 228 1120 Q225 1095 250 1070 Q300 1010 340 950Z" fill="url(#shoe)"/>
  <path d="M660 955 L800 945 Q820 1010 868 1080 Q880 1110 868 1130 Q800 1150 710 1135 Q660 1100 655 1060 Z" fill="url(#shoe)"/>
  <path d="M400 965 l-20 70 M700 965 l20 68" stroke="#9aa0b4" stroke-width="7" stroke-dasharray="4 7" fill="none"/>
  <path d="M285 52 L525 52 L525 150 Q508 300 496 550 L500 958 Q410 965 328 945 L318 700 Q300 400 285 52Z" fill="url(#legL)"/>
  <path d="M525 52 L765 52 Q782 400 800 700 L806 940 Q720 965 640 952 L600 550 Q566 300 525 150Z" fill="url(#legR)"/>
  <path d="M480 60 Q525 200 570 60 Z" fill="#2f5680" opacity="0.55" filter="url(#b6)"/>
  <g fill="#d3dbe4">
    <path d="M320 410 q60 -14 130 -4 l6 22 q-50 6 -70 14 q-40 4 -66 -8z"/>
    <path d="M338 478 l34 -2 l4 26 l84 -2 l-6 38 q-50 16 -100 6 l-6 -22 l-14 8z"/>
    <path d="M632 484 q60 -12 126 -10 l8 36 l-30 -6 l-4 24 l-56 2 l-6 -16 l-30 12z"/>
    <path d="M712 570 l22 0 l2 36 l-22 0z"/>
    <path d="M330 196 l14 0 l4 34 l-14 0z M362 220 l10 0 l0 12 l-10 0z"/>
    <path d="M716 72 l22 -4 l0 32 l-14 -6z"/>
  </g>
</g>

<!-- torso & arms : zoom 8.075 origin (1100,620) -->
<g transform="translate(123.1 369.2) scale(0.381)">
  <!-- neck -->
  <path d="M560 0 L560 110 Q650 200 740 110 L740 0 Z" fill="#efc89a"/>
  <path d="M560 0 L560 60 Q650 110 740 60 L740 0 Z" fill="#d9a97a" opacity="0.6"/>
  <!-- left arm -->
  <path d="M215 460 C190 560 160 640 148 720 C120 800 108 880 104 930 C86 980 90 1060 108 1120 Q118 1180 134 1180 Q142 1176 148 1160 Q160 1172 170 1158 Q176 1150 178 1136 Q192 1146 204 1136 Q196 1090 184 1060 C186 1010 182 970 180 935 C200 860 240 770 252 700 C280 640 310 570 332 515 Z" fill="url(#armL)"/>
  <!-- right arm -->
  <path d="M975 515 C1000 580 1030 650 1042 700 C1060 770 1080 860 1088 930 C1070 980 1056 1040 1060 1082 Q1074 1092 1090 1062 Q1092 1100 1100 1130 Q1104 1180 1122 1180 Q1134 1172 1140 1150 Q1152 1160 1162 1144 Q1172 1130 1176 1108 Q1190 1100 1192 1070 C1200 1030 1194 980 1172 930 C1168 880 1160 800 1140 720 C1130 640 1115 560 1095 455 Z" fill="url(#armR)"/>
  <!-- shirt -->
  <path d="M525 100 Q650 250 770 100 Q880 120 950 160 Q1010 200 1030 260 Q1070 360 1096 460 L975 522 L928 470 Q930 700 937 925 Q640 950 340 937 Q345 700 348 480 L332 522 L208 470 Q240 340 290 230 Q320 180 380 155 Q450 115 525 100 Z" fill="url(#shirt)"/>
  <path d="M348 480 Q345 700 340 937 Q640 950 937 925 Q930 700 928 470 Z" fill="url(#shside)"/>
  <path d="M208 470 Q240 340 290 230 Q320 190 360 165 Q330 330 332 522 Z" fill="#536094"/>
  <path d="M1096 460 Q1070 360 1030 260 Q1000 190 950 160 Q960 330 975 522 Z" fill="#485283"/>
  <path d="M525 100 Q650 250 770 100 L748 92 Q650 205 548 92 Z" fill="#5565a0"/>
  <path d="M540 98 Q650 222 760 98" stroke="#3a4273" stroke-width="5" fill="none"/>
  <!-- eagle -->
  <path d="M500 300 Q540 280 580 310 Q630 360 650 420 Q690 340 745 305 Q750 350 720 390 Q690 410 655 415 Q680 460 660 495 Q630 505 610 520 Q595 545 575 555 Q590 500 605 470 Q580 460 560 445 Q590 440 600 425 Q540 380 500 300 Z" fill="#2a3159" opacity="0.9"/>
  <path d="M608 250 l18 0 l-6 22z M650 250 l18 0 l-6 22z" fill="#2f3763" opacity="0.8"/>
  <path d="M700 720 Q760 820 800 925" stroke="#3d4674" stroke-width="10" fill="none" opacity="0.5" filter="url(#b6)"/>
</g>

<!-- head : zoom 10.77 origin (1130,530) -->
<g transform="translate(215.4 92.3) scale(0.2857)">
  <path d="M540 95C700 95 830 220 845 400C850 470 850 520 850 570C880 550 900 590 890 650C885 720 860 790 815 790C790 870 720 960 660 1010C620 1045 460 1045 420 1010C360 960 290 870 265 790C225 790 200 720 200 650C195 590 210 560 230 575C228 520 225 470 232 400C250 220 380 95 540 95Z" fill="url(#skinh)"/>
  <g clip-path="url(#headclip)">
    <path d="M200 560 Q250 560 262 790 L200 800Z M890 560 Q835 560 818 790 L900 800Z" fill="#e3b184" opacity="0.7" filter="url(#b6)"/>
    <path d="M340 800 Q540 735 740 800 Q800 830 775 890 Q700 1000 640 1030 Q540 1060 440 1030 Q370 1000 300 890 Q280 830 340 800Z" fill="#a88c6e" opacity="0.62" filter="url(#b14)"/>
    <ellipse cx="540" cy="1000" rx="130" ry="60" fill="#9c8268" opacity="0.6" filter="url(#b14)"/>
    <ellipse cx="540" cy="838" rx="135" ry="24" fill="#eec6a2" opacity="0.85" filter="url(#b6)"/>
    <path d="M400 818 Q540 840 680 810" stroke="#a97c5c" stroke-width="9" fill="none" stroke-linecap="round"/>
    <!-- nose -->
    <path d="M450 715 Q470 680 500 690 Q540 700 575 690 Q600 690 605 720 Q590 745 560 735 Q530 755 495 738 Q460 745 450 715Z" fill="#dba678" opacity="0.85" filter="url(#b6)"/>
    <!-- eyes -->
    <path d="M292 552 Q360 500 440 548 Q420 585 360 580 Q320 575 292 552Z" fill="#f3efec"/>
    <path d="M604 548 Q680 495 766 536 Q730 575 680 575 Q630 575 604 548Z" fill="#f3efec"/>
    <circle cx="385" cy="548" r="34" fill="#4877a8"/><circle cx="688" cy="538" r="34" fill="#4877a8"/>
    <circle cx="380" cy="542" r="15" fill="#1a1d26"/><circle cx="684" cy="532" r="15" fill="#1a1d26"/>
    <path d="M288 552 Q360 498 444 548" stroke="#8d6a50" stroke-width="9" fill="none"/><path d="M600 548 Q680 490 770 536" stroke="#8d6a50" stroke-width="9" fill="none"/>
    <!-- brows -->
    <path d="M246 470 Q290 396 360 394 Q420 400 470 430 L462 460 Q400 438 350 438 Q300 440 258 482Z" fill="#2a2022"/>
    <path d="M572 428 Q640 380 712 377 Q772 392 800 452 L786 464 Q750 428 700 420 Q640 420 582 456Z" fill="#2a2022"/>
  </g>
</g>
</svg>
  <div class="tab on" style="left:790px;width:389px;border-radius:8px 0 0 8px">Bitmoji</div>
  <div class="tab" style="left:1181px;width:389px;border-radius:0 8px 8px 0">Body Morph</div>

  <div id="import"><svg class="abs" style="left:16px;top:4px" width="32" height="32" viewBox="1338 1222 32 32"><g fill="none" stroke="#7f9cb7" stroke-width="2.4" stroke-linecap="round" stroke-linejoin="round"><path d="M1353.9 1227.2V1243.6M1347.8 1238.2L1353.9 1244.3L1360 1238.2" stroke-width="2.9" stroke="#8aa6c0"/><path d="M1347 1237.4H1346.2Q1343.6 1237.4 1343.6 1240V1245.6Q1343.6 1248.4 1346.4 1248.4H1361.4Q1364.2 1248.4 1364.2 1245.6V1240Q1364.2 1237.4 1361.6 1237.4H1360.8"/></g></svg><span class="abs" id="imptxt" style="left:57px;top:0">Import to project</span></div>
</div>
</body>
</html>
